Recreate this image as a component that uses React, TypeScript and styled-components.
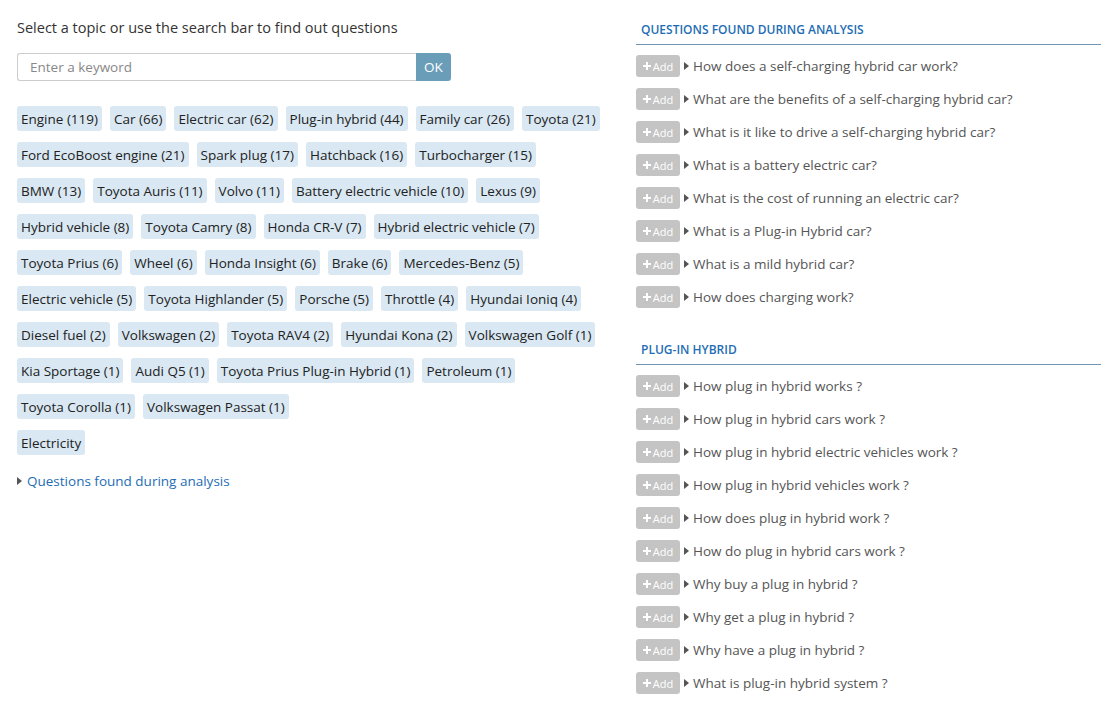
import React from "react";
import styled, { createGlobalStyle } from "styled-components";

const topics = [
  "Engine (119)", "Car (66)", "Electric car (62)", "Plug-in hybrid (44)", "Family car (26)", "Toyota (21)",
  "Ford EcoBoost engine (21)", "Spark plug (17)", "Hatchback (16)", "Turbocharger (15)",
  "BMW (13)", "Toyota Auris (11)", "Volvo (11)", "Battery electric vehicle (10)", "Lexus (9)",
  "Hybrid vehicle (8)", "Toyota Camry (8)", "Honda CR-V (7)", "Hybrid electric vehicle (7)",
  "Toyota Prius (6)", "Wheel (6)", "Honda Insight (6)", "Brake (6)", "Mercedes-Benz (5)",
  "Electric vehicle (5)", "Toyota Highlander (5)", "Porsche (5)", "Throttle (4)", "Hyundai Ioniq (4)",
  "Diesel fuel (2)", "Volkswagen (2)", "Toyota RAV4 (2)", "Hyundai Kona (2)", "Volkswagen Golf (1)",
  "Kia Sportage (1)", "Audi Q5 (1)", "Toyota Prius Plug-in Hybrid (1)", "Petroleum (1)",
  "Toyota Corolla (1)", "Volkswagen Passat (1)",
];

const extraTopics = ["Electricity"];

const sections = [
  {
    title: "Questions found during analysis",
    questions: [
      "How does a self-charging hybrid car work?",
      "What are the benefits of a self-charging hybrid car?",
      "What is it like to drive a self-charging hybrid car?",
      "What is a battery electric car?",
      "What is the cost of running an electric car?",
      "What is a Plug-in Hybrid car?",
      "What is a mild hybrid car?",
      "How does charging work?",
    ],
  },
  {
    title: "Plug-in hybrid",
    questions: [
      "How plug in hybrid works ?",
      "How plug in hybrid cars work ?",
      "How plug in hybrid electric vehicles work ?",
      "How plug in hybrid vehicles work ?",
      "How does plug in hybrid work ?",
      "How do plug in hybrid cars work ?",
      "Why buy a plug in hybrid ?",
      "Why get a plug in hybrid ?",
      "Why have a plug in hybrid ?",
      "What is plug-in hybrid system ?",
    ],
  },
];

const GlobalStyle = createGlobalStyle`
  body {
    margin: 0;
    background: #fff;
    font-family: "Open Sans", "Noto Sans", sans-serif;
    color: #333;
    overflow: hidden;
  }
`;

const Caret = () => (
  <svg width="5" height="8" viewBox="0 0 5 8">
    <path d="M0 0 L5 4 L0 8 Z" fill="currentColor" />
  </svg>
);

const PlusIcon = () => (
  <svg width="8" height="8" viewBox="0 0 8 8">
    <path d="M3 0 H5 V3 H8 V5 H5 V8 H3 V5 H0 V3 H3 Z" fill="currentColor" />
  </svg>
);

export default function App() {
  return (
    <Page>
      <GlobalStyle />
      <LeftColumn>
        <Intro>Select a topic or use the search bar to find out questions</Intro>
        <SearchBar>
          <SearchInput placeholder="Enter a keyword" />
          <OkButton>OK</OkButton>
        </SearchBar>
        <TagList>
          {topics.map((t) => (
            <Tag key={t}>{t}</Tag>
          ))}
        </TagList>
        <TagList $spaced>
          {extraTopics.map((t) => (
            <Tag key={t}>{t}</Tag>
          ))}
        </TagList>
        <Toggle>
          <Caret />
          <span>Questions found during analysis</span>
        </Toggle>
      </LeftColumn>
      <RightColumn>
        {sections.map((s) => (
          <Section key={s.title}>
            <SectionTitle>{s.title}</SectionTitle>
            {s.questions.map((q) => (
              <QuestionRow key={q}>
                <AddButton>
                  <PlusIcon />
                  Add
                </AddButton>
                <QuestionText>
                  <Caret />
                  <span>{q}</span>
                </QuestionText>
              </QuestionRow>
            ))}
          </Section>
        ))}
      </RightColumn>
    </Page>
  );
}

const Page = styled.div`
  display: grid;
  grid-template-columns: 636px 1fr;
  width: 1101px;
  height: 704px;
`;

const LeftColumn = styled.div`
  padding: 17px 0 0 17px;
`;

const Intro = styled.div`
  font-size: 14.5px;
  color: #333;
  line-height: 22px;
`;

const SearchBar = styled.div`
  display: flex;
  margin-top: 14px;
  width: 434px;
  height: 28px;
`;

const SearchInput = styled.input`
  flex: 1;
  box-sizing: border-box;
  height: 28px;
  border: 1px solid #ccc;
  border-right: none;
  border-radius: 3px 0 0 3px;
  padding: 0 12px;
  font-family: inherit;
  font-size: 13.5px;
  color: #333;
  outline: none;

  &::placeholder {
    color: #888;
  }
`;

const OkButton = styled.button`
  width: 35px;
  border: none;
  border-radius: 0 3px 3px 0;
  background: #6a9db8;
  color: #fff;
  font-family: inherit;
  font-size: 13.5px;
  padding: 0;
`;

const TagList = styled.div<{ $spaced?: boolean }>`
  display: flex;
  flex-wrap: wrap;
  column-gap: 8px;
  row-gap: 11px;
  margin-top: ${(p) => (p.$spaced ? "11px" : "25px")};
  width: 590px;
`;

const Tag = styled.span`
  display: inline-flex;
  align-items: center;
  height: 25px;
  padding: 0 4px;
  border-radius: 3px;
  background: #d9e8f2;
  color: #222;
  font-size: 13.5px;
  white-space: nowrap;
`;

const Toggle = styled.div`
  display: flex;
  align-items: center;
  gap: 5px;
  margin-top: 17px;
  color: #1e6db4;
  font-size: 13.5px;

  svg {
    color: #555;
  }
`;

const RightColumn = styled.div`
  padding-top: 21px;
`;

const Section = styled.div`
  margin-bottom: 33px;
`;

const SectionTitle = styled.div`
  padding: 0 0 6px 5px;
  border-bottom: 1px solid #6f95b2;
  color: #1e6db4;
  font-size: 12px;
  font-weight: 600;
  text-transform: uppercase;
  margin-bottom: 10px;
`;

const QuestionRow = styled.div`
  display: flex;
  align-items: center;
  height: 22px;
  margin-bottom: 11px;
`;

const AddButton = styled.span`
  display: inline-flex;
  align-items: center;
  justify-content: center;
  gap: 2px;
  width: 44px;
  height: 22px;
  border-radius: 3px;
  background: #c4c4c4;
  color: #fff;
  font-size: 11px;
`;

const QuestionText = styled.span`
  display: flex;
  align-items: center;
  gap: 4px;
  margin-left: 4px;
  color: #555;
  font-size: 13.5px;

  svg {
    color: #555;
  }
`;
